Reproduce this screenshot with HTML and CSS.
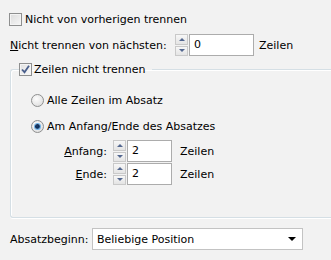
FILE: index.html
```html
<!DOCTYPE html>
<html lang="de">
<head>
  <meta charset="UTF-8" />
  <title>Umbruchoptionen</title>
  <link rel="stylesheet" href="styles.css">
</head>
<body>
  <div class="dialog">
    <div class="row row-first">
      <span class="check"></span>
      <span class="text">Nicht von vorherigen trennen</span>
    </div>

    <div class="row row-keep">
      <span class="keep-label"><u>N</u>icht trennen von nächsten:</span>
      <span class="spin"><span class="spin-btn up"></span><span class="spin-btn down"></span></span>
      <span class="field field-wide">0</span>
      <span class="unit">Zeilen</span>
    </div>

    <fieldset class="group">
      <legend class="group-title">
        <span class="check checked">
          <svg width="11" height="11" viewBox="0 0 11 11"><path d="M2 5.5 L4.5 8.2 L9 1.8" fill="none" stroke="#4a5f8c" stroke-width="1.8"/></svg>
        </span>
        <span class="text">Zeilen nicht trennen</span>
      </legend>

      <div class="row radio-row radio-first">
        <span class="radio"></span>
        <span class="text">Alle Zeilen im Absatz</span>
      </div>
      <div class="row radio-row radio-second">
        <span class="radio on"></span>
        <span class="text">Am Anfang/Ende des Absatzes</span>
      </div>

      <div class="row num-row num-first">
        <span class="num-label"><u>A</u>nfang:</span>
        <span class="spin"><span class="spin-btn up"></span><span class="spin-btn down"></span></span>
        <span class="field field-small">2</span>
        <span class="unit unit-small">Zeilen</span>
      </div>
      <div class="row num-row num-second">
        <span class="num-label"><u>E</u>nde:</span>
        <span class="spin"><span class="spin-btn up"></span><span class="spin-btn down"></span></span>
        <span class="field field-small">2</span>
        <span class="unit unit-small">Zeilen</span>
      </div>
    </fieldset>

    <div class="row row-start">
      <span class="start-label">Absatzbe<u>g</u>inn:</span>
      <div class="select">
        <span>Beliebige Position</span>
        <span class="select-arrow"></span>
      </div>
    </div>
  </div>
</body>
</html>
```

FILE: styles.css
```css
body {
  margin: 0;
  background-color: #f2f2f2;
  font-family: 'DejaVu Sans', Verdana, sans-serif;
  font-size: 11px;
  color: #000;
  overflow: hidden;
}

.dialog {
  padding-top: 12px;
}

.row {
  display: flex;
  align-items: center;
}

u {
  text-decoration: underline;
  text-underline-offset: 1px;
}

/* checkbox */
.check {
  width: 11px;
  height: 11px;
  border: 1px solid #8e8f8f;
  background: linear-gradient(135deg, #dcdcdc, #f6f6f6);
  box-shadow: inset 0 0 0 1px #f4f4f4;
  display: flex;
  align-items: center;
  justify-content: center;
  flex-shrink: 0;
}

.check.checked {
  background: linear-gradient(135deg, #e0e0e0, #fafafa);
}

.row-first {
  height: 15px;
  padding-left: 9px;
}

.row-first .text {
  margin-left: 3px;
}

.row-keep {
  height: 22px;
  margin-top: 7px;
  padding-left: 10px;
}

.keep-label {
  width: 165px;
}

/* spinner */
.spin {
  width: 13px;
  height: 22px;
  display: flex;
  flex-direction: column;
  gap: 1px;
  flex-shrink: 0;
}

.spin-btn {
  flex: 1;
  border: 1px solid #c9c9c9;
  background: linear-gradient(#f7f7f7, #e4e4e4);
  display: flex;
  align-items: center;
  justify-content: center;
}

.spin-btn::after {
  content: "";
  border-left: 3px solid transparent;
  border-right: 3px solid transparent;
}

.spin-btn.up::after {
  border-bottom: 3px solid #53678f;
}

.spin-btn.down::after {
  border-top: 3px solid #53678f;
}

.field {
  height: 20px;
  line-height: 20px;
  border: 1px solid #acacac;
  background-color: #fff;
  padding-left: 4px;
  margin-left: 1px;
  box-sizing: content-box;
}

.field-wide {
  width: 59px;
}

.field-small {
  width: 39px;
}

.unit {
  margin-left: 5px;
}

.unit-small {
  margin-left: 8px;
}

/* group box, open on the right edge */
.group {
  margin: 6px 0 0 10px;
  padding: 0 0 32px 0;
  border: 1px solid #d5dfe5;
  border-right: none;
  border-radius: 3px 0 0 3px;
  box-shadow: inset 1px 1px 0 #fff, 0 1px 0 #fff;
}

.group-title {
  display: flex;
  align-items: center;
  height: 15px;
  margin-left: 8px;
  padding: 0 6px 0 0;
}

.group-title .text {
  margin-left: 2px;
}

.radio-row {
  height: 15px;
  padding-left: 20px;
}

.radio-first {
  margin-top: 16px;
}

.radio-second {
  margin-top: 11px;
}

.radio-row .text {
  margin-left: 3px;
}

.radio {
  width: 11px;
  height: 11px;
  border: 1px solid #8e8f8f;
  border-radius: 50%;
  background: radial-gradient(circle at 40% 35%, #fdfdfd, #d8d8d8);
  flex-shrink: 0;
  display: flex;
  align-items: center;
  justify-content: center;
}

.radio.on::after {
  content: "";
  width: 5px;
  height: 5px;
  border-radius: 50%;
  background: radial-gradient(circle at 40% 40%, #1b3d6b, #0b2a55 45%, #3b8fd6 100%);
  box-shadow: 0 0 0 1px #6fb3ea;
}

.num-row {
  height: 22px;
}

.num-first {
  margin-top: 6px;
}

.num-second {
  margin-top: 1px;
}

.num-label {
  width: 76px;
  margin-left: 20px;
  margin-right: 6px;
  text-align: right;
}

/* bottom select */
.row-start {
  margin-top: 10px;
  padding-left: 10px;
}

.start-label {
  width: 82px;
}

.select {
  width: 203px;
  height: 20px;
  border: 1px solid #c3c3c3;
  background-color: #fff;
  padding-left: 4px;
  padding-right: 2px;
  display: flex;
  align-items: center;
  justify-content: space-between;
  box-sizing: content-box;
}

.select-arrow {
  margin-right: 4px;
  border-left: 4px solid transparent;
  border-right: 4px solid transparent;
  border-top: 4px solid #000;
}
```
